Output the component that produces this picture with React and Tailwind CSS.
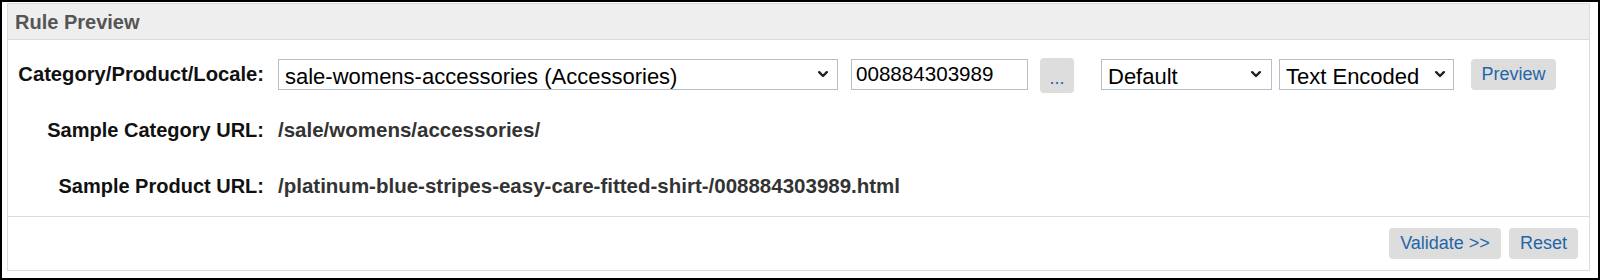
import * as React from "react";

function Chevron() {
  return (
    <svg width="10" height="7" viewBox="0 0 10 7" fill="none">
      <path d="M1.2 1.2 L5 5 L8.8 1.2" stroke="#222" strokeWidth="2.4" strokeLinecap="round" strokeLinejoin="round" />
    </svg>
  );
}

function Select({ value, className, arrowRight }) {
  return (
    <div className={`relative h-[31px] border border-[#b6bfc7] bg-white ${className}`}>
      <select
        defaultValue={value}
        className="w-full h-full appearance-none bg-transparent pl-[6px] pr-6 text-[22px] text-black outline-none"
      >
        <option>{value}</option>
      </select>
      <span className={`pointer-events-none absolute top-[11px] ${arrowRight}`}>
        <Chevron />
      </span>
    </div>
  );
}

function Button({ children, className = "" }) {
  return (
    <button className={`h-[31px] rounded-[4px] bg-[#dddddd] text-[18px] text-[#1f66a8] ${className}`}>
      {children}
    </button>
  );
}

export default function App() {
  const rows = [
    { label: "Sample Category URL:", value: "/sale/womens/accessories/" },
    { label: "Sample Product URL:", value: "/platinum-blue-stripes-easy-care-fitted-shirt-/008884303989.html" },
  ];

  return (
    <div className="w-[1600px] h-[280px] bg-white border-2 border-black pt-px pl-[5px] pr-[8px] pb-[7px] font-['Liberation_Sans',Arial,sans-serif]">
      <div className="h-full border border-[#dcdcdc] flex flex-col">
        <div className="h-[36px] shrink-0 bg-[#eeeeee] border-b border-[#dcdcdc] flex items-center pl-[7px]">
          <h2 className="text-[20px] font-bold text-[#555]">Rule Preview</h2>
        </div>

        <div className="flex-1 pt-[6px] pl-[9px] grid grid-cols-[247px_1fr] gap-x-[14px] auto-rows-[56px] items-center">
          <div className="text-right text-[20.2px] font-bold text-[#111] whitespace-nowrap">Category/Product/Locale:</div>
          <div className="flex items-center">
            <Select value="sale-womens-accessories (Accessories)" className="w-[560px]" arrowRight="right-[9px]" />
            <input
              defaultValue="008884303989"
              className="ml-[13px] w-[177px] h-[31px] border border-[#b6bfc7] pl-[4px] text-[20.6px] text-black outline-none"
            />
            <Button className="ml-[12px] w-[34px] h-[35px] mt-[3px] pt-[6px] text-[15px]">...</Button>
            <Select value="Default" className="ml-[27px] w-[171px]" arrowRight="right-[10px]" />
            <Select value="Text Encoded" className="ml-[7px] w-[175px]" arrowRight="right-[8px]" />
            <Button className="ml-[17px] w-[85px] h-[30px] text-[17.5px]">Preview</Button>
          </div>

          {rows.map((row) => (
            <React.Fragment key={row.label}>
              <div className="text-right text-[20px] font-bold text-[#111] whitespace-nowrap">{row.label}</div>
              <div className="text-[20.5px] font-bold text-[#333] whitespace-nowrap">{row.value}</div>
            </React.Fragment>
          ))}
        </div>

        <div className="h-[54px] shrink-0 border-t border-[#dcdcdc] flex items-center justify-end gap-[8px] pr-[11px]">
          <Button className="w-[112px]">Validate &gt;&gt;</Button>
          <Button className="w-[69px]">Reset</Button>
        </div>
      </div>
    </div>
  );
}
